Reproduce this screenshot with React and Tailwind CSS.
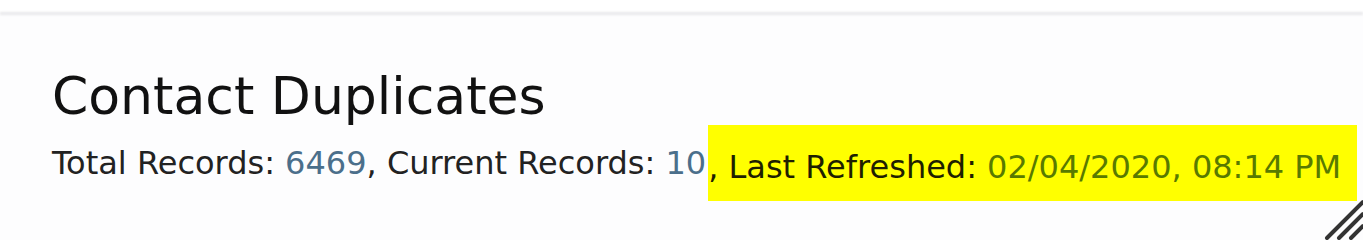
import React from "react"

function ResizeGrip() {
  return (
    <svg className="absolute right-0 bottom-0" width="40" height="44" viewBox="0 0 40 44">
      <g stroke="#333" strokeWidth="4" strokeLinecap="round">
        <line x1="4" y1="42" x2="40" y2="6" />
        <line x1="16" y1="42" x2="40" y2="18" />
        <line x1="28" y1="42" x2="40" y2="30" />
      </g>
    </svg>
  )
}

export default function App() {
  return (
    <div className="relative w-[1363px] h-[240px] overflow-hidden bg-[#fdfdfe] font-['DejaVu_Sans',Verdana,sans-serif]">
      {/* header shadow */}
      <div className="h-[12px] bg-white" />
      <div className="h-[3px] bg-[#e9e9eb] blur-[1px]" />

      <div className="pl-[52px] pt-[55px]">
        <h1 className="text-[52px] leading-none text-[#111]">Contact Duplicates</h1>

        <div className="flex items-center mt-[3px] text-[32px] leading-[32px] text-[#222]">
          <span>Total Records:&nbsp;</span>
          <span className="text-[#4b6f8b]">6469</span>
          <span>, Current Records:&nbsp;</span>
          <span className="text-[#4b6f8b]">10</span>
          <span className="bg-[#ffff00] pt-[26px] pb-[18px] pr-[16px] ml-[2px]">
            <span className="text-[#1f1f00]">, Last Refreshed:&nbsp;</span>
            <span className="text-[#587a00]">02/04/2020, 08:14 PM</span>
          </span>
        </div>
      </div>

      <ResizeGrip />
    </div>
  )
}
